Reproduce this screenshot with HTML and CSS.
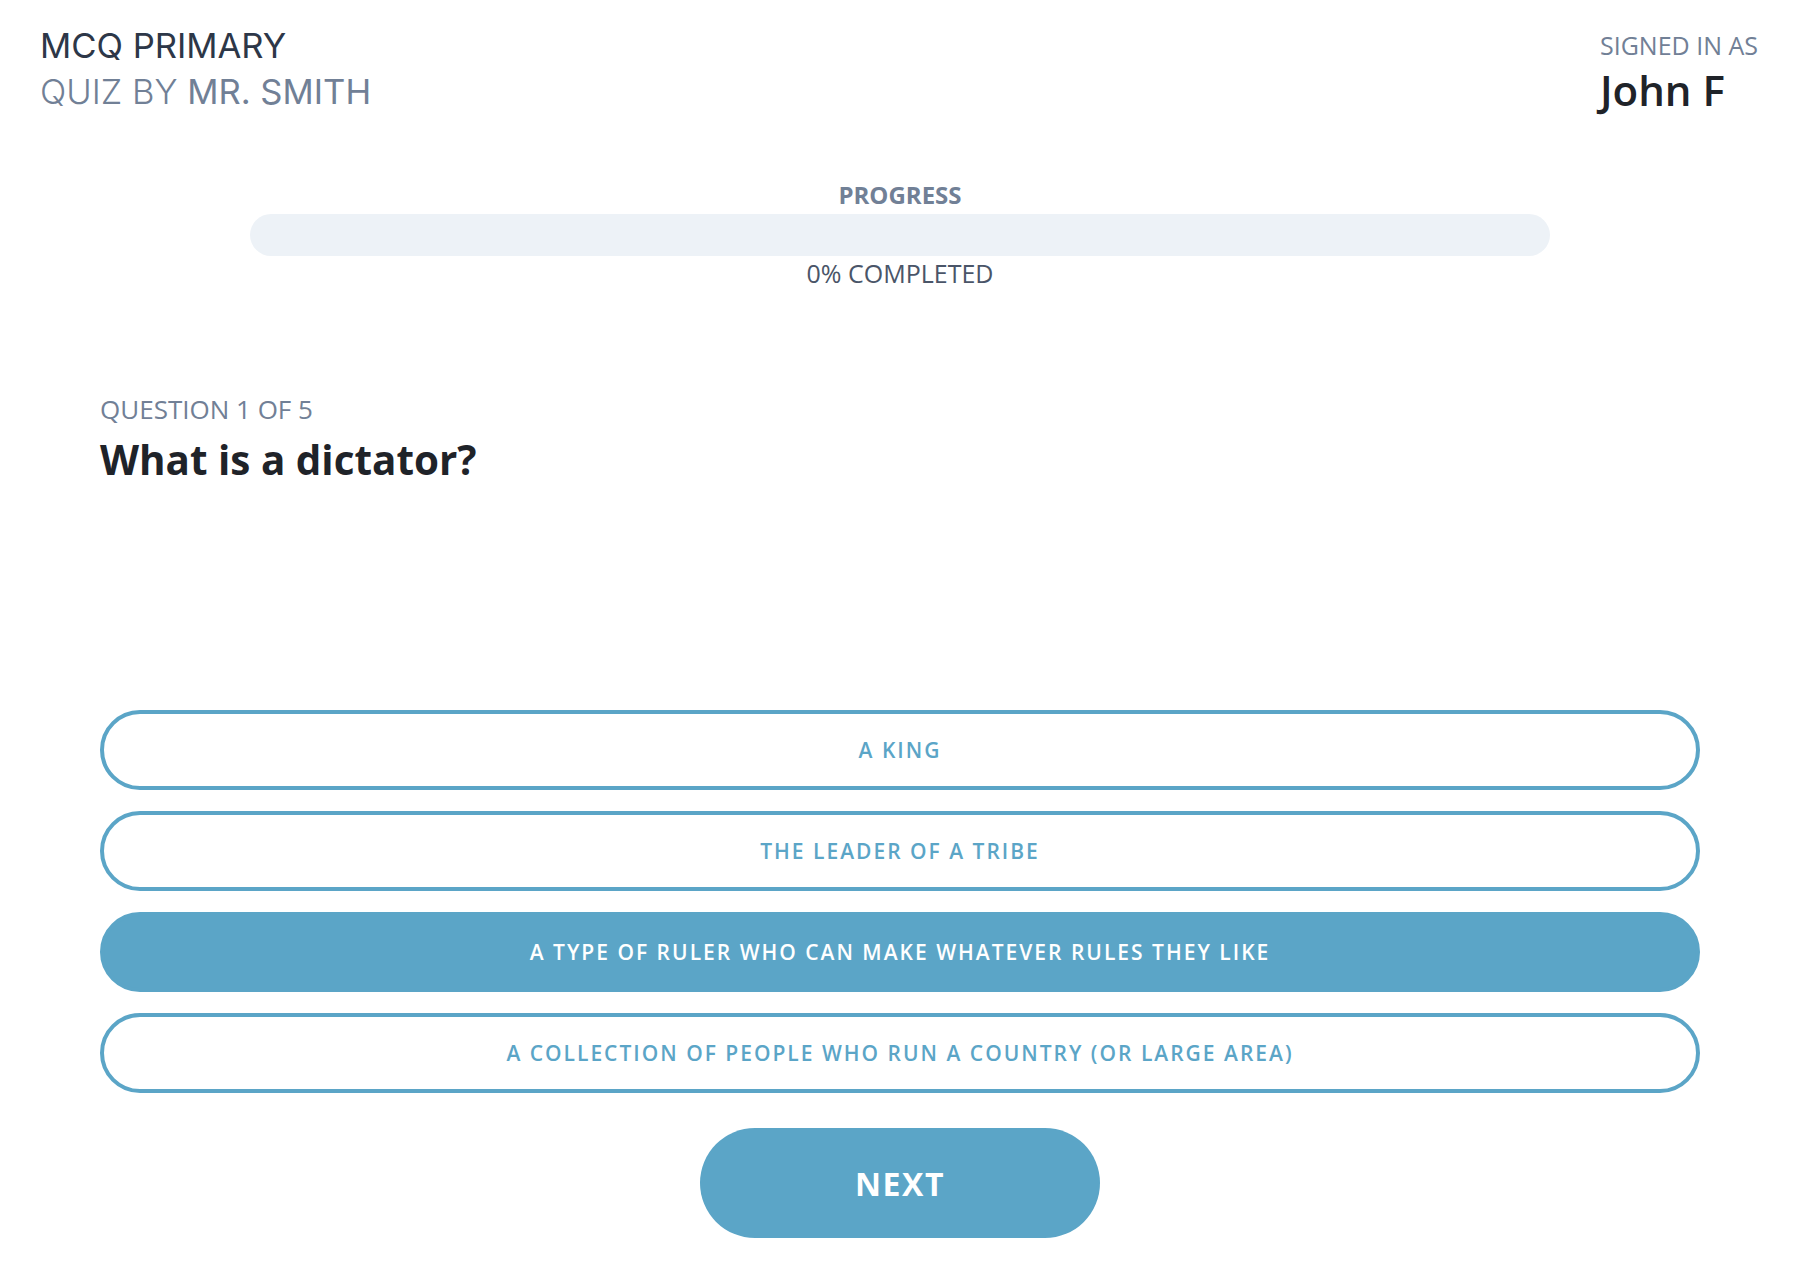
FILE: index.html
```html
<!DOCTYPE html>
<html lang="en">
<head>
<meta charset="utf-8">
<title>MCQ Primary – Quiz</title>
<link rel="stylesheet" href="styles.css">
</head>
<body>
<div class="page">
  <header class="topbar">
    <div class="quiz-meta">
      <div class="quiz-title">MCQ PRIMARY</div>
      <div class="quiz-author"><span class="light">QUIZ BY</span> MR. SMITH</div>
    </div>
    <div class="user">
      <div class="user-label">SIGNED IN AS</div>
      <div class="user-name">John F</div>
    </div>
  </header>

  <div class="content">
    <section class="progress">
      <div class="progress-label">PROGRESS</div>
      <div class="progress-track"><div class="progress-fill" style="width:0%"></div></div>
      <div class="progress-value">0% COMPLETED</div>
    </section>

    <section class="question">
      <div class="question-count">QUESTION 1 OF 5</div>
      <h1 class="question-text">What is a dictator?</h1>
    </section>

    <div class="options">
      <button class="option">A KING</button>
      <button class="option">THE LEADER OF A TRIBE</button>
      <button class="option selected">A TYPE OF RULER WHO CAN MAKE WHATEVER RULES THEY LIKE</button>
      <button class="option">A COLLECTION OF PEOPLE WHO RUN A COUNTRY (OR LARGE AREA)</button>
    </div>

    <div class="actions">
      <button class="next">NEXT</button>
    </div>
  </div>
</div>
</body>
</html>
```

FILE: styles.css
```css
* { box-sizing: border-box; }

html, body {
  margin: 0;
  padding: 0;
  background: #ffffff;
}

body {
  font-family: "Open Sans", "Liberation Sans", sans-serif;
  color: #1a202c;
  width: 1796px;
  min-height: 1284px;
}

.topbar {
  display: flex;
  justify-content: space-between;
  align-items: flex-start;
  padding: 22px 38px 0 40px;
}

.quiz-meta {
  font-family: Inter, "Liberation Sans", sans-serif;
  font-size: 34.6px;
  line-height: 46px;
}

.quiz-title {
  color: #2d3748;
  font-weight: 400;
}

.quiz-author {
  color: #718096;
  font-weight: 400;
}

.quiz-author .light {
  font-weight: 300;
}

.user {
  padding-top: 6px;
}

.user-label {
  font-size: 25px;
  line-height: 34px;
  color: #718096;
}

.user-name {
  font-size: 42px;
  line-height: 56px;
  font-weight: 600;
  color: #1f2329;
}

.content {
  padding: 0 96px 0 100px;
}

.progress {
  margin: 61px 150px 0 150px;
  display: flex;
  flex-direction: column;
  align-items: center;
}

.progress-label {
  font-size: 24px;
  line-height: 32px;
  font-weight: 700;
  color: #718096;
}

.progress-track {
  margin-top: 3px;
  width: 100%;
  height: 42px;
  border-radius: 21px;
  background: #edf2f7;
  overflow: hidden;
}

.progress-fill {
  height: 100%;
  background: #5ba5c7;
}

.progress-value {
  margin-top: 0;
  font-size: 25px;
  line-height: 34px;
  color: #4a5568;
}

.question {
  margin-top: 101px;
}

.question-count {
  font-size: 26px;
  line-height: 36px;
  color: #718096;
}

.question-text {
  margin: 6px 0 0 0;
  font-size: 40.4px;
  line-height: 54px;
  font-weight: 700;
  color: #1f2329;
}

.options {
  margin-top: 223px;
  display: flex;
  flex-direction: column;
  gap: 21px;
}

.option {
  display: flex;
  align-items: center;
  justify-content: center;
  width: 100%;
  height: 80px;
  border: 4px solid #5ba5c7;
  border-radius: 40px;
  background: #ffffff;
  color: #5ba5c7;
  font-family: "Open Sans", "Liberation Sans", sans-serif;
  font-size: 21px;
  font-weight: 600;
  letter-spacing: 2px;
  cursor: pointer;
  padding: 0 40px;
}

.option.selected {
  background: #5ba5c7;
  color: #ffffff;
}

.actions {
  margin-top: 35px;
  display: flex;
  justify-content: center;
}

.next {
  width: 400px;
  height: 110px;
  border: none;
  border-radius: 55px;
  background: #5ba5c7;
  color: #ffffff;
  font-family: "Open Sans", "Liberation Sans", sans-serif;
  font-size: 32px;
  font-weight: 700;
  letter-spacing: 1.5px;
  cursor: pointer;
}
```
